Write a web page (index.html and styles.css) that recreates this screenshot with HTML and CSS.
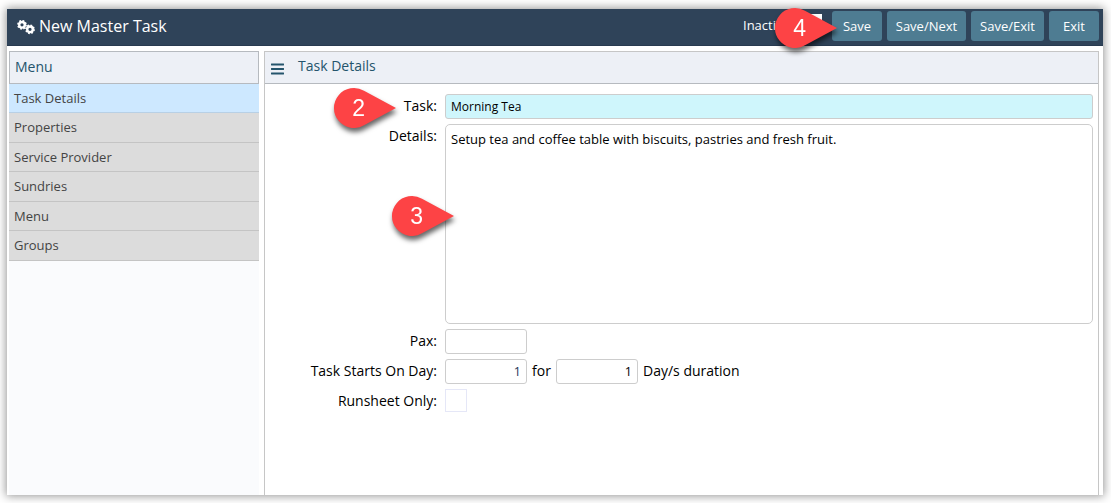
FILE: index.html
```html
<!DOCTYPE html>
<html lang="en">
<head>
<meta charset="utf-8">
<title>New Master Task</title>
<link rel="stylesheet" href="styles.css">
</head>
<body>
<div class="window">
  <header class="topbar">
    <svg class="gears" viewBox="0 0 18 15" width="18" height="15">
      <g fill="none" stroke="#fff">
        <circle cx="5" cy="4.800" r="2.8" stroke-width="2.4"/>
        <circle cx="5" cy="4.800" r="4.1" stroke-width="1.6" stroke-dasharray="1.7 1.52"/>
        <circle cx="13" cy="9.300" r="2.8" stroke-width="2.4"/>
        <circle cx="13" cy="9.300" r="4.1" stroke-width="1.6" stroke-dasharray="1.7 1.52"/>
      </g>
    </svg>
    <h1 class="title">New Master Task</h1>
    <div class="inactive">Inactive:<span class="inactive-box"></span></div>
    <div class="actions">
      <button class="btn btn-save">Save</button>
      <button class="btn btn-next">Save/Next</button>
      <button class="btn btn-save-exit">Save/Exit</button>
      <button class="btn btn-exit">Exit</button>
    </div>
  </header>
  <main class="columns">
    <nav class="sidebar">
      <div class="menu-head">Menu</div>
      <div class="item active">Task Details</div>
      <div class="item tall">Properties</div>
      <div class="item">Service Provider</div>
      <div class="item tall">Sundries</div>
      <div class="item">Menu</div>
      <div class="item tall">Groups</div>
    </nav>
    <section class="panel">
      <div class="panel-head">
        <svg class="bars" viewBox="0 0 13 12" width="13" height="12"><path d="M.5 1.5h12M.5 6h12M.5 10.5h12" stroke="#24546c" stroke-width="1.9" stroke-linecap="round"/></svg>
        <span>Task Details</span>
      </div>
      <div class="form">
        <label class="label">Task:</label>
        <div class="field task">Morning Tea</div>
        <label class="label">Details:</label>
        <div class="field details">Setup tea and coffee table with biscuits, pastries and fresh fruit.</div>
        <label class="label">Pax:</label>
        <div class="field num"></div>
        <label class="label">Task Starts On Day:</label>
        <div class="row"><div class="field num start">1</div><span class="for">for</span><div class="field num">1</div><span class="duration">Day/s duration</span></div>
        <label class="label">Runsheet Only:</label>
        <div class="check"></div>
      </div>
    </section>
  </main>
</div>
<svg class="pin pin-2" viewBox="0 0 62 40" width="62" height="40"><path d="M62 20L30 37.300A20 20 0 1 1 30 2.700Z"/><text x="24.700" y="28">2</text></svg>
<svg class="pin pin-3" viewBox="0 0 62 40" width="62" height="40"><path d="M62 20L30 37.300A20 20 0 1 1 30 2.700Z"/><text x="24.700" y="28">3</text></svg>
<svg class="pin pin-4" viewBox="0 0 62 40" width="62" height="40"><path d="M62 20L30 37.300A20 20 0 1 1 30 2.700Z"/><text x="24.700" y="28">4</text></svg>
</body>
</html>
```
FILE: styles.css
```css
* { box-sizing: border-box; }
body {
  margin: 0;
  height: 503px;
  padding: 9px 8px 8px 7px;
  overflow: hidden;
  background: #fff;
  font-family: "Open Sans", sans-serif;
  font-size: 14px;
  color: #000;
}
.window {
  height: 486px;
  display: flex;
  flex-direction: column;
  background: #fff;
  box-shadow: 0 0 9px 1px rgba(0, 0, 0, .42);
}
.topbar {
  height: 37px;
  flex: none;
  display: flex;
  align-items: flex-start;
  padding: 2px 4px 0 10px;
  background: #2f4359;
  border-bottom: 1px solid #283a50;
  color: #fff;
}
.gears { margin: 9px 4px 0 0; }
.title { margin: 4px 0 0; font-size: 16px; line-height: 22px; font-weight: 400; }
.inactive {
  margin-left: auto;
  width: 79px;
  display: flex;
  justify-content: space-between;
  padding-top: 3px;
  font-size: 13px;
  line-height: 22px;
}
.inactive-box { width: 17px; height: 17px; background: #fff; }
.actions { display: flex; gap: 5px; margin-left: 10px; }
.btn {
  height: 30px;
  padding: 0;
  border: 0;
  border-radius: 3px;
  background: #4e7c92;
  color: #fff;
  font: 13px/30px "Open Sans", sans-serif;
}
.btn-save, .btn-exit { width: 50px; }
.btn-next { width: 79px; }
.btn-save-exit { width: 73px; }
.columns { flex: 1; display: flex; gap: 5px; padding: 5px 4px 0 2px; }
.sidebar { width: 250px; background: #fafbfd; }
.menu-head {
  height: 33px;
  padding-left: 5px;
  border: 1px solid #b6babf;
  background: #edf0f6;
  color: #24546c;
  line-height: 30px;
}
.item {
  height: 29px;
  padding-left: 5px;
  border-bottom: 1px solid #c4c4c4;
  background: #dcdcdc;
  color: #444;
  font-size: 13px;
  line-height: 29px;
}
.item.tall { height: 30px; }
.item.active { background: #cde8ff; border-color: #b8d0e5; }
.panel { flex: 1; border: 1px solid #c6c6c6; border-bottom: 0; }
.panel-head {
  height: 32px;
  display: flex;
  gap: 14px;
  padding-left: 6px;
  border-bottom: 1px solid #b6babf;
  background: #edf0f6;
  color: #24546c;
  line-height: 28px;
}
.bars { margin-top: 11px; }
.form {
  display: grid;
  grid-template-columns: 172px 648px;
  grid-template-rows: 25px 200px 25px 25px 23px;
  column-gap: 8px;
  row-gap: 5px;
  padding-top: 10px;
}
.label { text-align: right; line-height: 24px; }
.field {
  border: 1px solid #cdcdcd;
  border-radius: 3px;
  padding: 0 5px;
  background: #fff;
  font-size: 13px;
  line-height: 23px;
}
.field.task { background: #cff6fc; font-size: 12px; line-height: 24px; }
.field.details { padding-top: 3px; border-radius: 5px; }
.field.num { width: 82px; text-align: right; font-size: 12.500px; }
.field.start { color: #1c3557; }
.row { display: flex; line-height: 24px; }
.for { width: 29px; padding-left: 5px; }
.duration { margin-left: 5px; }
.check { width: 22px; height: 23px; border: 1px solid #e5e7f7; }
.pin {
  position: absolute;
  overflow: visible;
  filter: drop-shadow(1px 4px 2.500px rgba(0, 0, 0, .6));
}
.pin path { fill: #fd4345; }
.pin text { fill: #fff; font: 23px "Liberation Sans", sans-serif; text-anchor: middle; }
.pin-2 { left: 334px; top: 88px; }
.pin-3 { left: 392px; top: 196px; }
.pin-4 { left: 775px; top: 8px; }
```
